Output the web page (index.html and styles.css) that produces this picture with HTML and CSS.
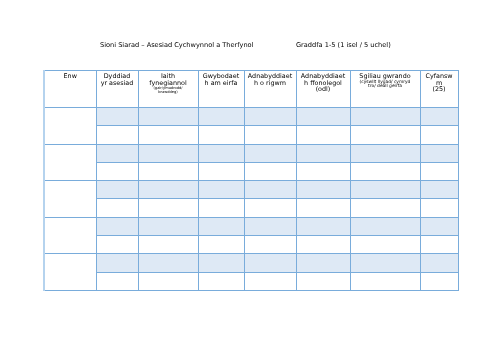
FILE: index.html
```html
<!DOCTYPE html>
<html>
<head>
<meta charset="utf-8">
<link rel="stylesheet" href="styles.css">
</head>
<body>
<div class="page">
  <div class="title">
    <span class="t1">Sioni Siarad – Asesiad Cychwynnol a Therfynol</span>
    <span class="t2">Graddfa 1-5 (1 isel / 5 uchel)</span>
  </div>
  <table class="grid">
    <colgroup>
      <col class="c1"><col class="c2"><col class="c3"><col class="c4"><col class="c5"><col class="c6"><col class="c7"><col class="c8">
    </colgroup>
    <thead>
      <tr class="head">
        <th>Enw</th>
        <th>Dyddiad<br>yr asesiad</th>
        <th>Iaith<br>fynegiannol<br><span class="tiny">(gair/ymadrodd/<br>brawddeg)</span></th>
        <th>Gwybodaet<br>h am eirfa</th>
        <th>Adnabyddiaet<br>h o rigwm</th>
        <th>Adnabyddiaet<br>h ffonolegol<br>(odl)</th>
        <th>Sgiliau gwrando<br><span class="small">(cyswllt llygad/ cymryd<br>tro/ deall geirfa</span></th>
        <th>Cyfansw<br>m<br>(25)</th>
      </tr>
    </thead>
    <tbody>
      <tr class="a"><td rowspan="2" class="name"></td><td></td><td></td><td></td><td></td><td></td><td></td><td></td></tr>
      <tr class="b"><td></td><td></td><td></td><td></td><td></td><td></td><td></td></tr>
      <tr class="a"><td rowspan="2" class="name"></td><td></td><td></td><td></td><td></td><td></td><td></td><td></td></tr>
      <tr class="b"><td></td><td></td><td></td><td></td><td></td><td></td><td></td></tr>
      <tr class="a"><td rowspan="2" class="name"></td><td></td><td></td><td></td><td></td><td></td><td></td><td></td></tr>
      <tr class="b"><td></td><td></td><td></td><td></td><td></td><td></td><td></td></tr>
      <tr class="a"><td rowspan="2" class="name"></td><td></td><td></td><td></td><td></td><td></td><td></td><td></td></tr>
      <tr class="b"><td></td><td></td><td></td><td></td><td></td><td></td><td></td></tr>
      <tr class="a"><td rowspan="2" class="name"></td><td></td><td></td><td></td><td></td><td></td><td></td><td></td></tr>
      <tr class="b"><td></td><td></td><td></td><td></td><td></td><td></td><td></td></tr>
    </tbody>
  </table>
</div>
</body>
</html>
```
FILE: styles.css
```css
html, body {
  margin: 0;
  padding: 0;
  background: #ffffff;
}
body {
  width: 500px;
  height: 353px;
  overflow: hidden;
  font-family: "DejaVu Sans", "Liberation Sans", sans-serif;
  color: #000;
  -webkit-font-smoothing: antialiased;
}
.page {
  padding: 41px 0 0 43px;
  will-change: transform;
}
.title {
  display: flex;
  font-size: 6.6px;
  line-height: 9px;
  height: 9px;
  padding-left: 57px;
  margin-bottom: 20px;
}
.t1 { width: 196px; }
.grid {
  border-collapse: collapse;
  table-layout: fixed;
  width: 414px;
}
.c1 { width: 52px; }
.c2 { width: 42px; }
.c3 { width: 60px; }
.c4 { width: 46px; }
.c5 { width: 52px; }
.c6 { width: 54px; }
.c7 { width: 70px; }
.c8 { width: 38px; }
.grid th, .grid td {
  border: 1px solid #79acdb;
  padding: 0;
}
.grid th {
  font-weight: normal;
  font-size: 6.4px;
  line-height: 6.7px;
  vertical-align: top;
  text-align: center;
  padding-top: 2px;
  color: #000;
  height: 34px;
}
.grid .tiny {
  font-size: 3.6px;
  line-height: 4px;
  display: inline-block;
}
.grid .small {
  font-size: 4.4px;
  line-height: 4.6px;
  display: inline-block;
}
tr.a td { height: 17.3px; background: #dee9f5; }
tr.b td { height: 17.3px; background: #ffffff; }
tr.a td.name { background: #ffffff; }
.grid th:first-child, .grid td.name { border-left: 2px solid #b5d3ee; }
```
